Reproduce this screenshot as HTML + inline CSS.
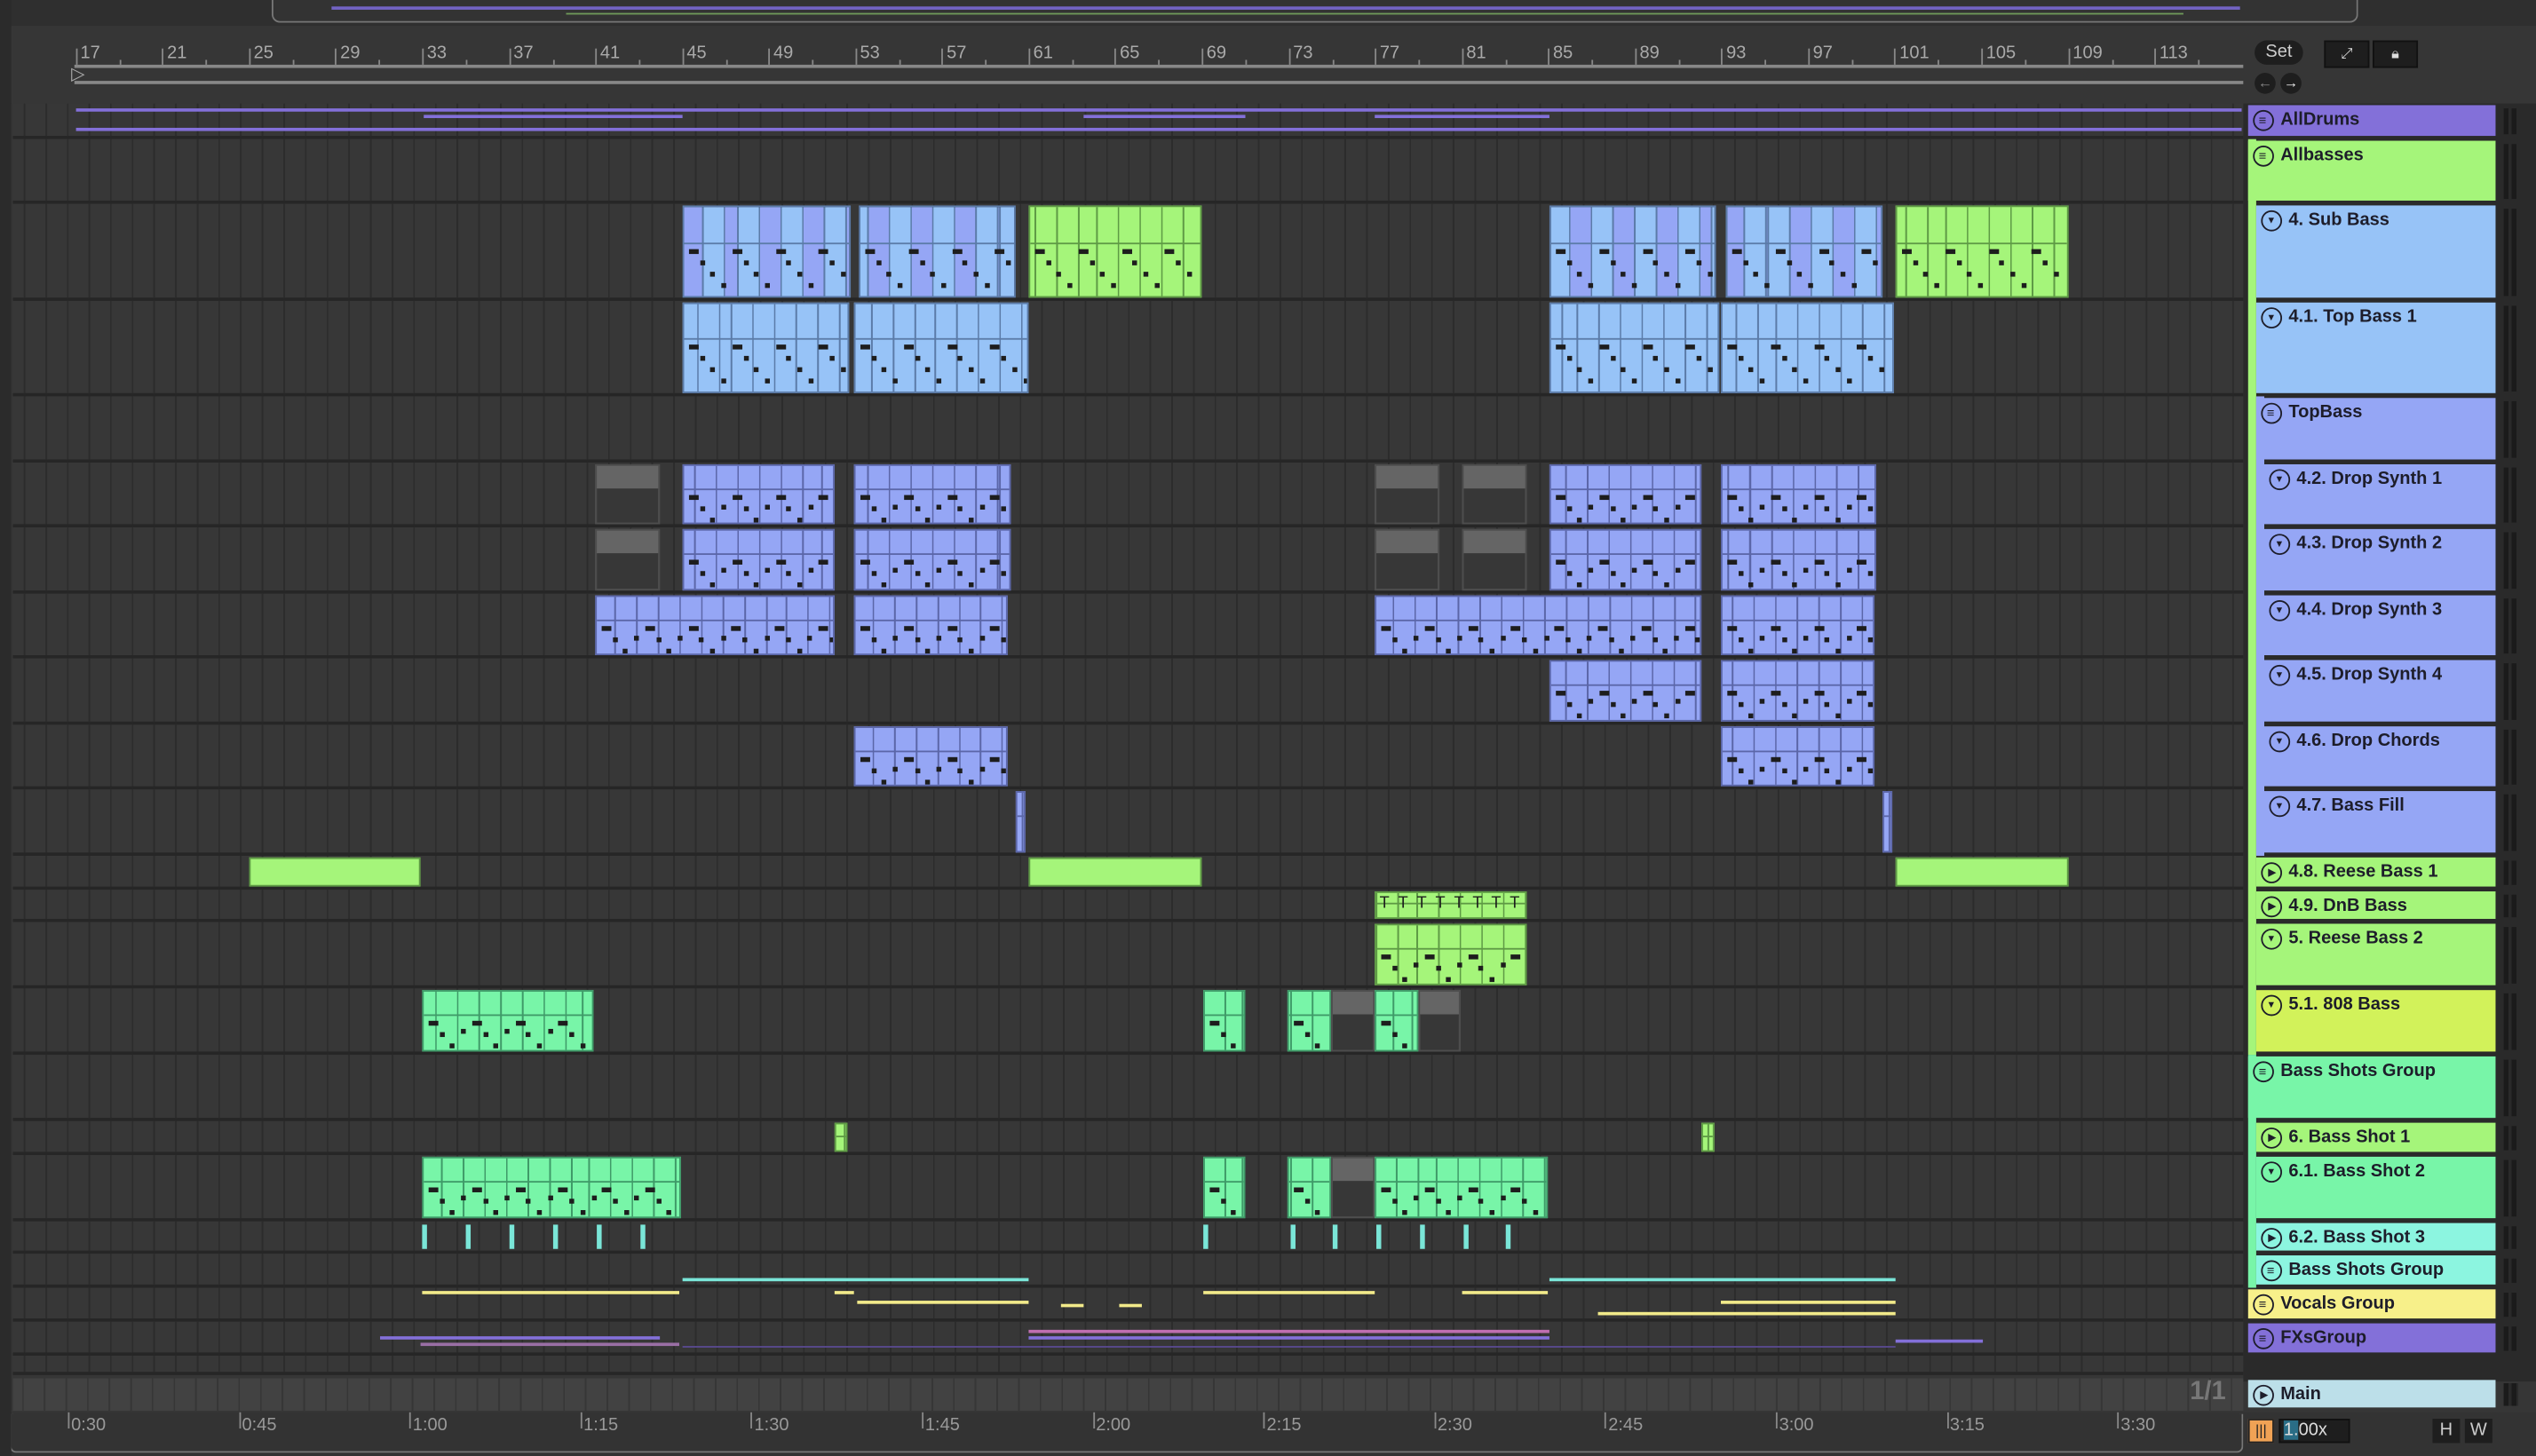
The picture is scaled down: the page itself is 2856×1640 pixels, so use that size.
<!DOCTYPE html>
<html><head><meta charset="utf-8">
<style>
html,body{margin:0;padding:0;background:#2b2b2b;overflow:hidden;width:2856px;height:1640px}
#s{position:absolute;left:0;top:0;width:1568px;height:900px;transform-origin:0 0;transform:scale(1.82143,1.82222);background:#363636;font-family:"Liberation Sans",sans-serif;overflow:hidden}
.a{position:absolute}
.hd{position:absolute;color:#1d1d2a;font-size:11px;font-weight:bold;box-sizing:border-box;padding-left:20px;line-height:19px;white-space:nowrap}
.ic{position:absolute;left:3px;top:3px;width:13px;height:13px;border:1.3px solid #1d1d2a;border-radius:50%;box-sizing:border-box}
.m{position:absolute;left:1548px;width:9px;background:#1b1b1b}
.rl{position:absolute;top:27px;color:#aaa;font-size:11px}
.tl{position:absolute;top:875px;color:#999;font-size:11px}
</style></head><body>
<div id="s">
<div class="a" style="left:0;top:0;width:1568px;height:16px;background:#2f2f2f"></div>
<div class="a" style="left:168px;top:0;width:1290px;height:14px;border:1.5px solid #777;border-top:none;border-radius:0 0 5px 5px;box-sizing:border-box;background:#333"></div>
<div class="a" style="left:205px;top:4px;width:1180px;height:2px;background:#7363c4"></div>
<div class="a" style="left:350px;top:8px;width:1000px;height:1px;background:#6f9a5a"></div>
<div class="a" style="left:0;top:16px;width:1568px;height:48px;background:#363636"></div>
<div class="a" style="left:46px;top:40px;width:1341px;height:1.5px;background:#888"></div>
<div class="a" style="left:46px;top:50px;width:1341px;height:1.5px;background:#888"></div>
<div class="a" style="left:44px;top:39px;color:#aaa;font-size:11px">▷</div>
<div id="rul"></div>
<div class="a" style="left:1394px;top:25px;width:30px;height:15px;border-radius:8px;background:#1e1e1e;color:#ccc;font-size:11px;text-align:center;line-height:15px">Set</div>
<div class="a" style="left:1437px;top:25px;width:26px;height:15px;background:#1e1e1e;border:1px solid #111;color:#ddd;font-size:9px;text-align:center;line-height:15px">⤢</div>
<div class="a" style="left:1467px;top:25px;width:26px;height:15px;background:#1e1e1e;border:1px solid #111;color:#ddd;font-size:9px;text-align:center;line-height:15px">🔒︎</div>
<div class="a" style="left:1394px;top:45px;width:13px;height:13px;border-radius:50%;background:#1e1e1e;color:#888;font-size:9px;text-align:center;line-height:13px">←</div>
<div class="a" style="left:1410px;top:45px;width:13px;height:13px;border-radius:50%;background:#1e1e1e;color:#eee;font-size:9px;text-align:center;line-height:13px">→</div>
<div id="lanes"></div>
<div id="clips"></div>
<div class="a" style="left:1387px;top:64px;width:181px;height:790px;background:#2a2a2a"></div>
<div id="hdrs"></div>
<div class="a" style="left:8px;top:852px;width:1379px;height:20px;background:repeating-linear-gradient(90deg,#424242 0,#424242 12.4px,#363636 12.4px,#363636 13.39px);background-position:46.7px 0"></div>
<div class="a" style="left:1354px;top:852px;color:#777;font-size:16px;font-weight:bold">1/1</div>
<div class="a" style="left:0;top:873px;width:1568px;height:27px;background:#333"></div>
<div class="a" style="left:6px;top:874px;width:1381px;height:24px;border:1.5px solid #777;border-top:none;border-radius:0 0 4px 4px;box-sizing:border-box"></div>
<div id="tls"></div>
<div class="a" style="left:1390px;top:877px;width:16px;height:15px;background:#f0a255;border:1px solid #222;box-sizing:border-box;color:#222;font-size:9px;text-align:center;line-height:13px">|||</div>
<div class="a" style="left:1409px;top:877px;width:44px;height:15px;background:#1e1e1e;border:1px solid #111;box-sizing:border-box;color:#ddd;font-size:11px;line-height:13px;padding-left:2px"><span style="background:#2a6d86">1.</span>00x</div>
<div class="a" style="left:1504px;top:877px;width:17px;height:15px;background:#1e1e1e;color:#ccc;font-size:11px;text-align:center;line-height:15px">H</div>
<div class="a" style="left:1524px;top:877px;width:17px;height:15px;background:#1e1e1e;color:#ccc;font-size:11px;text-align:center;line-height:15px">W</div>
<div class="a" style="left:0;top:0;width:7px;height:900px;background:#2b2b2b"></div>
</div>
<script>
const B=13.39,X0=46.7;
function bx(b){return X0+(b-17)*B}
let h='';
for(let b=17;b<=113;b+=4){const x=bx(b);h+=`<div class="a" style="left:${x}px;top:30px;width:1px;height:10px;background:#888"></div><div class="rl" style="left:${x+3}px">${b}</div><div class="a" style="left:${x+27}px;top:37px;width:1px;height:3px;background:#888"></div>`}
document.getElementById('rul').innerHTML=h;
const rows=[[64,86],[86,126],[126,186],[186,245],[245,286],[286,326],[326,367],[367,407],[407,448],[448,488],[488,529],[529,550],[550,570],[570,611],[611,652],[652,693],[693,714],[714,755],[755,775],[775,796],[796,817],[817,838],[838,850]];
h='';
for(const [a,b] of rows){h+=`<div class="a" style="left:8px;top:${a}px;width:1379px;height:${b-a-2}px;background:repeating-linear-gradient(90deg,#2c2c2c 0,#2c2c2c 1px,#373737 1px,#373737 13.39px);background-position:${X0}px 0"></div><div class="a" style="left:8px;top:${b-2}px;width:1379px;height:2px;background:#262626"></div>`}
document.getElementById('lanes').innerHTML=h;
const C={b:['#97c3f7','#5b7ba8'],s:['#97c3f7','#5b7ba8'],p:['#95a6f5','#5b66a8'],g:['#a5f57a','#5e9a45'],t:['#78f5a8','#3f9a68'],gr:['#656565','#4d4d4d']};
function clip(x1,x2,r,c,notes,plain){const [y1,y2]=rows[r];const [bg,bd]=C[c];const H=y2-y1-3;const hb=Math.round(H*0.38);
let back=`repeating-linear-gradient(90deg,${bd} 0,${bd} 1px,transparent 1px,transparent 13.39px),${bg}`;
if(c=='s')back=`repeating-linear-gradient(90deg,${bd} 0,${bd} 1px,#97c3f7 1px,#97c3f7 13.39px,${bd} 13.39px,${bd} 14.39px,#95a6f5 14.39px,#95a6f5 26.78px)`;
if(c=='gr'||plain)back=bg;
let s=`<div class="a" style="left:${x1}px;top:${y1+1}px;width:${x2-x1}px;height:${H}px;background:${back};background-position:${X0-x1}px 0;border:1px solid ${bd};box-sizing:border-box;overflow:hidden">`;
if(!plain)s+=`<div class="a" style="left:0;top:${hb}px;width:100%;height:1px;background:${bd}"></div>`;
if(notes&&c!='gr'){for(let x=3;x<x2-x1-4;x+=6.7){const k=Math.floor(x/6.7)%4;const yy=hb+4+((k*7)%(H-hb-8));s+=`<div class="a" style="left:${x}px;top:${yy}px;width:${k==0?6:3}px;height:2.5px;background:#1d1d1d"></div>`}}
if(c=='gr'){s+=`<div class="a" style="left:0;top:${hb}px;width:100%;height:${H}px;background:#373737"></div>`}
return s+'</div>'}
h='';
const cl=[
[422,526,2,'s',1],[531,628,2,'s',1],[636,743,2,'g',1],[958,1061,2,'s',1],[1067,1164,2,'s',1],[1172,1279,2,'g',1],
[422,525,3,'b',1],[528,636,3,'b',1],[958,1063,3,'b',1],[1064,1171,3,'b',1],
[368,408,5,'gr'],[422,516,5,'p',1],[528,625,5,'p',1],[850,890,5,'gr'],[904,944,5,'gr'],[958,1052,5,'p',1],[1064,1160,5,'p',1],
[368,408,6,'gr'],[422,516,6,'p',1],[528,625,6,'p',1],[850,890,6,'gr'],[904,944,6,'gr'],[958,1052,6,'p',1],[1064,1160,6,'p',1],
[368,516,7,'p',1],[528,623,7,'p',1],[850,1052,7,'p',1],[1064,1159,7,'p',1],
[958,1052,8,'p',1],[1064,1159,8,'p',1],
[528,623,9,'p',1],[1064,1159,9,'p',1],
[628,634,10,'p'],[1164,1170,10,'p'],
[154,260,11,'g',0,1],[636,743,11,'g',0,1],[1172,1279,11,'g',0,1],
[850,944,12,'g'],
[850,944,13,'g',1],
[261,367,14,'t',1],[744,770,14,'t',1],[796,823,14,'t',1],[823,850,14,'gr'],[850,877,14,'t',1],[877,903,14,'gr'],
[516,524,16,'g'],[1052,1060,16,'g'],
[261,421,17,'t',1],[744,770,17,'t',1],[796,823,17,'t',1],[823,850,17,'gr'],[850,957,17,'t',1]];
for(const c of cl)h+=clip(...c);
for(let i=0;i<8;i++)h+=`<div class="a" style="left:${853+i*11.5}px;top:553px;font-size:10px;color:#1d1d1d">T</div>`;
for(const x of [261,288,315,342,369,396,744,798,824,851,878,905,931])h+=`<div class="a" style="left:${x}px;top:757px;width:3px;height:15px;background:#7ae6d8"></div>`;
function ln(x1,x2,y,c,hh){h+=`<div class="a" style="left:${x1}px;top:${y}px;width:${x2-x1}px;height:${hh||2}px;background:${c}"></div>`}
const P='#8370d9';
ln(47,1386,67,P);ln(262,422,71,P);ln(47,1386,79,P);ln(670,770,71,P);ln(850,958,71,P);
ln(422,636,790,'#7ae6d8',1.5);ln(958,1172,790,'#7ae6d8',1.5);
ln(261,420,798,'#f2ea8a');ln(744,850,798,'#f2ea8a');ln(904,957,798,'#f2ea8a');ln(516,528,798,'#f2ea8a');ln(530,636,804,'#f2ea8a');ln(988,1172,811,'#f2ea8a');ln(1064,1172,804,'#f2ea8a');ln(656,670,806,'#f2ea8a');ln(692,706,806,'#f2ea8a');
ln(235,408,826,P);ln(260,420,830,'#9a6fa5');ln(636,958,822,'#c06fb0');ln(636,958,826,P);ln(1172,1226,828,P);ln(422,1172,832,'#5a4a90',1);
document.getElementById('clips').innerHTML=h;
const hd=[
[64,86,1390,'#8370d9','AllDrums','g'],[86,126,1390,'#a5f57a','Allbasses','g'],[126,186,1395,'#97c3f7','4. Sub Bass','d'],[186,245,1395,'#97c3f7','4.1. Top Bass 1','d'],[245,286,1395,'#95a6f5','TopBass','g'],
[286,326,1400,'#95a6f5','4.2. Drop Synth 1','d'],[326,367,1400,'#95a6f5','4.3. Drop Synth 2','d'],[367,407,1400,'#95a6f5','4.4. Drop Synth 3','d'],[407,448,1400,'#95a6f5','4.5. Drop Synth 4','d'],[448,488,1400,'#95a6f5','4.6. Drop Chords','d'],[488,529,1400,'#95a6f5','4.7. Bass Fill','d'],
[529,550,1395,'#a5f57a','4.8. Reese Bass 1','p'],[550,570,1395,'#a5f57a','4.9. DnB Bass','p'],[570,611,1395,'#a5f57a','5. Reese Bass 2','d'],[611,652,1395,'#d2f25a','5.1. 808 Bass','d'],
[652,693,1390,'#78f5a8','Bass Shots Group','g'],[693,714,1395,'#a5f57a','6. Bass Shot 1','p'],[714,755,1395,'#78f5a8','6.1. Bass Shot 2','d'],[755,775,1395,'#8cf5e0','6.2. Bass Shot 3','p'],[775,796,1395,'#8cf5e0','Bass Shots Group','g'],
[796,817,1390,'#f7f08a','Vocals Group','g'],[817,838,1390,'#8370d9','FXsGroup','g'],[852,872,1390,'#bcdfe9','Main','p']];
h='';
h+=`<div class="a" style="left:1390px;top:86px;width:5px;height:566px;background:#a5f57a"></div>`;
h+=`<div class="a" style="left:1395px;top:245px;width:5px;height:284px;background:#95a6f5"></div>`;
h+=`<div class="a" style="left:1390px;top:652px;width:5px;height:144px;background:#78f5a8"></div>`;
for(const [a,b,x,c,t,k] of hd){let ic=k=='g'?'<span style="position:absolute;left:2.5px;top:2px;font-size:8px;line-height:8px">≡</span>':k=='d'?'<span style="position:absolute;left:2.3px;top:3px;font-size:6px;line-height:6px">▼</span>':'<span style="position:absolute;left:3.5px;top:2.5px;font-size:6px;line-height:6px">▶</span>';
h+=`<div class="hd" style="left:${x}px;top:${a+1}px;width:${1543-x}px;height:${b-a-3}px;background:${c}"><div class="ic">${ic}</div>${t}</div>`;
h+=`<div class="m" style="top:${a+3}px;height:${b-a-6}px;background:repeating-linear-gradient(90deg,#1b1b1b 0,#1b1b1b 3px,#2a2a2a 3px,#2a2a2a 5px,#1b1b1b 5px)"></div>`}
document.getElementById('hdrs').innerHTML=h;
h='';const tl=['0:30','0:45','1:00','1:15','1:30','1:45','2:00','2:15','2:30','2:45','3:00','3:15','3:30'];
tl.forEach((t,i)=>{const x=42+i*105.6;h+=`<div class="a" style="left:${x}px;top:873px;width:1px;height:10px;background:#888"></div><div class="tl" style="left:${x+2}px">${t}</div>`});
document.getElementById('tls').innerHTML=h;
</script>
</body></html>
